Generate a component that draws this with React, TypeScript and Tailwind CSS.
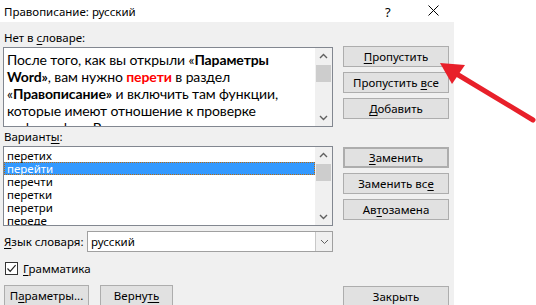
import React from "react";

const UI = "font-['Segoe_UI','Noto_Sans',sans-serif]";

function Btn({ children, className = "" }: { children: React.ReactNode; className?: string }) {
  return (
    <div
      className={`h-[21px] flex items-center justify-center bg-[#e1e1e1] border border-[#adadad] text-[11.5px] text-black leading-none whitespace-nowrap ${className}`}
    >
      {children}
    </div>
  );
}

function U({ children }: { children: React.ReactNode }) {
  return <span className="underline underline-offset-2">{children}</span>;
}

function ScrollBar() {
  return (
    <div className="w-[17px] h-full bg-[#f0f0f0] flex flex-col items-center shrink-0">
      <svg width="17" height="17" viewBox="0 0 17 17" className="shrink-0">
        <path d="M5 10 L8.5 6.5 L12 10" fill="none" stroke="#606060" strokeWidth="1.4" />
      </svg>
      <div className="w-[15px] h-[17px] bg-[#cdcdcd]" />
      <div className="flex-1" />
      <svg width="17" height="17" viewBox="0 0 17 17" className="shrink-0">
        <path d="M5 7 L8.5 10.5 L12 7" fill="none" stroke="#606060" strokeWidth="1.4" />
      </svg>
    </div>
  );
}

const VARIANTS = ["перетих", "перейти", "перечти", "перетки", "перетри", "переде"];

export default function App() {
  return (
    <div className={`w-[536px] h-[305px] bg-white relative overflow-hidden text-black ${UI}`}>
      <div className="w-[454px] h-full flex flex-col">
        {/* Title bar */}
        <div className="h-[22px] bg-white relative shrink-0">
          <span className="absolute left-[4px] top-[3px] text-[11.5px]">Правописание: русский</span>
          <span className="absolute left-[385px] top-[3px] text-[13px]">?</span>
          <svg className="absolute left-[428px] top-[5px]" width="11" height="11" viewBox="0 0 11 11">
            <path d="M0.5 0.5 L10.5 10.5 M10.5 0.5 L0.5 10.5" stroke="#000" strokeWidth="1" />
          </svg>
        </div>

        {/* Body */}
        <div className="flex-1 bg-[#f0f0f0] flex pl-[3px] gap-[10px]">
          {/* Left column */}
          <div className="w-[330px] flex flex-col">
            <div className="h-[25px] text-[11.5px] leading-none pt-[10px] pl-[1px]">
              Нет в <U>с</U>ловаре:
            </div>
            <div className="h-[80px] bg-white border border-[#828790] flex overflow-hidden">
              <div className="flex-1 px-[3px] pt-[3px] font-['Lato','Open_Sans',sans-serif] text-[14px] tracking-[-0.1px] leading-[17px] whitespace-nowrap overflow-hidden">
                <div>
                  После того, как вы открыли «<b>Параметры</b>
                </div>
                <div>
                  <b>Word»</b>, вам нужно <b className="text-[#ff0000]">перети</b> в раздел
                </div>
                <div>
                  «<b>Правописание»</b> и включить там функции,
                </div>
                <div>которые имеют отношение к проверке</div>
                <div>орфографии. В</div>
              </div>
              <ScrollBar />
            </div>
            <div className="h-[19px] text-[11.5px] leading-none pt-[4px] pl-[1px]">
              Вариант<U>ы</U>:
            </div>
            <div className="h-[80px] bg-white border border-[#828790] flex overflow-hidden">
              <div className="flex-1 pt-[2px] text-[11.5px] overflow-hidden">
                {VARIANTS.map((v, i) => (
                  <div
                    key={v}
                    className={
                      i === 1
                        ? "h-[13px] leading-[11px] pl-[2px] bg-[#3399ff] text-white border border-dotted border-[#b86a10]"
                        : "h-[13px] leading-[13px] pl-[3px]"
                    }
                  >
                    {v}
                  </div>
                ))}
              </div>
              <ScrollBar />
            </div>
            <div className="mt-[5px] h-[21px] flex items-center">
              <div className="w-[84px] text-[11.5px] pl-[1px] whitespace-nowrap">
                <U>Я</U>зык словаря:
              </div>
              <div className="flex-1 h-full bg-white border border-[#a0a0a0] flex">
                <div className="flex-1 text-[11.5px] leading-[19px] pl-[3px]">русский</div>
                <div className="w-[17px] h-full bg-[#f0f0f0] border-l border-[#c8c8c8] flex items-center justify-center">
                  <svg width="9" height="6" viewBox="0 0 9 6">
                    <path d="M1 1 L4.5 4.5 L8 1" fill="none" stroke="#606060" strokeWidth="1" />
                  </svg>
                </div>
              </div>
            </div>
            <div className="mt-[10px] h-[13px] flex items-center gap-[5px] pl-[2px]">
              <div className="w-[13px] h-[13px] bg-white border border-[#333] flex items-center justify-center">
                <svg width="11" height="11" viewBox="0 0 11 11">
                  <path d="M1.5 5.5 L4.2 8.3 L9.6 2.2" fill="none" stroke="#222" strokeWidth="1.2" />
                </svg>
              </div>
              <span className="text-[11.5px] leading-none">
                <U>Г</U>рамматика
              </span>
            </div>
            <div className="mt-[10px] flex gap-[11px] pl-[1px]">
              <Btn className="w-[85px]">
                П<U>а</U>раметры...
              </Btn>
              <Btn className="w-[73px]">
                Верну<U>ть</U>
              </Btn>
            </div>
          </div>

          {/* Right column */}
          <div className="w-[106px] flex flex-col pt-[24px]">
            <Btn>
              <U>П</U>ропустить
            </Btn>
            <Btn className="mt-[5px]">
              Пропустить&nbsp;<U>в</U>се
            </Btn>
            <Btn className="mt-[5px]">
              <U>Д</U>обавить
            </Btn>
            <Btn className="mt-[28px] border-2 border-[#0078d7]">
              <U>З</U>аменить
            </Btn>
            <Btn className="mt-[5px]">
              Заменить вс<U>е</U>
            </Btn>
            <Btn className="mt-[5px]">
              Ав<U>т</U>озамена
            </Btn>
            <Btn className="mt-[66px]">Закрыть</Btn>
          </div>
        </div>
      </div>

      {/* Red arrow */}
      <svg className="absolute left-0 top-0" width="536" height="305" viewBox="0 0 536 305">
        <line x1="533" y1="120" x2="455" y2="73" stroke="#e8202a" strokeWidth="5" strokeLinecap="round" />
        <polygon points="440,63 465,65 452,84" fill="#e8202a" />
      </svg>
    </div>
  );
}
